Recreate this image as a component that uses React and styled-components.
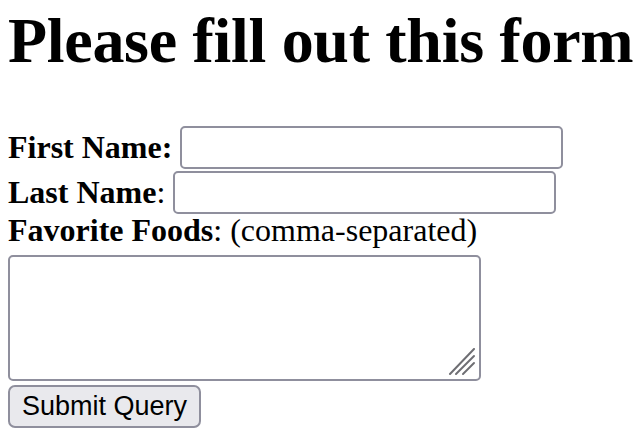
import React from 'react';
import styled, { createGlobalStyle } from 'styled-components';

const GlobalStyle = createGlobalStyle`
    html, body {
        margin: 0;
        padding: 0;
        background: #ffffff;
    }
    body {
        font-family: "Liberation Serif", "Times New Roman", serif;
        color: #000000;
    }
`;

const Page = styled.div`
    padding: 0 8px;
`;

const Title = styled.h1`
    margin: 4px 0 0;
    font-size: 64px;
    line-height: 74px;
    font-weight: 700;
    letter-spacing: -0.3px;
    white-space: nowrap;
`;

const Form = styled.form`
    display: flex;
    flex-direction: column;
    align-items: flex-start;
    margin-top: 48px;
`;

const Row = styled.div`
    display: flex;
    align-items: center;
    gap: 8px;
    height: ${(props) => props.height || 43}px;
    margin-top: ${(props) => props.offset || 0}px;
    font-size: 32px;
    line-height: ${(props) => props.height || 43}px;
    white-space: nowrap;
`;

const Label = styled.label`
    font-weight: normal;

    & > b {
        font-weight: 700;
    }
`;

const TextInput = styled.input`
    box-sizing: border-box;
    width: 383px;
    height: 43px;
    margin: 0;
    padding: 0 6px;
    border: 2px solid #8f8f9d;
    border-radius: 5px;
    background: #ffffff;
    font-size: 26px;
    outline: none;
`;

const AreaWrap = styled.div`
    position: relative;
    margin-top: 9px;
    width: 473px;
    height: 126px;
`;

const TextArea = styled.textarea`
    box-sizing: border-box;
    display: block;
    width: 100%;
    height: 100%;
    margin: 0;
    padding: 4px;
    border: 2px solid #8f8f9d;
    border-radius: 5px;
    background: #ffffff;
    resize: none;
    outline: none;
    font-size: 26px;
`;

const Grip = styled.svg`
    position: absolute;
    right: 5px;
    bottom: 5px;
    width: 28px;
    height: 28px;
    pointer-events: none;
`;

const SubmitButton = styled.button`
    box-sizing: border-box;
    margin-top: 4px;
    width: 193px;
    height: 43px;
    padding: 0;
    border: 2px solid #8f8f9d;
    border-radius: 7px;
    background: #e9e9ed;
    color: #000000;
    font-family: "Liberation Sans", Arial, sans-serif;
    font-size: 27px;
    line-height: 39px;
    cursor: pointer;
`;

const App = () => {
    return (
        <Page>
            <GlobalStyle />
            <Title>Please fill out this form</Title>
            <Form onSubmit={(e) => e.preventDefault()}>
                <Row>
                    <Label htmlFor="first"><b>First Name:</b></Label>
                    <TextInput id="first" type="text" />
                </Row>
                <Row offset={2}>
                    <Label htmlFor="last"><b>Last Name</b>:</Label>
                    <TextInput id="last" type="text" />
                </Row>
                <Row height={32}>
                    <Label htmlFor="foods"><b>Favorite Foods</b>: (comma-separated)</Label>
                </Row>
                <AreaWrap>
                    <TextArea id="foods" />
                    <Grip viewBox="0 0 28 28">
                        <g stroke="#6e6e73" strokeWidth="2" strokeLinecap="round">
                            <line x1="2" y1="26" x2="26" y2="1" />
                            <line x1="8" y1="26" x2="26" y2="8" />
                            <line x1="15" y1="26" x2="26" y2="15" />
                        </g>
                    </Grip>
                </AreaWrap>
                <SubmitButton type="submit">Submit Query</SubmitButton>
            </Form>
        </Page>
    );
};

export default App;
